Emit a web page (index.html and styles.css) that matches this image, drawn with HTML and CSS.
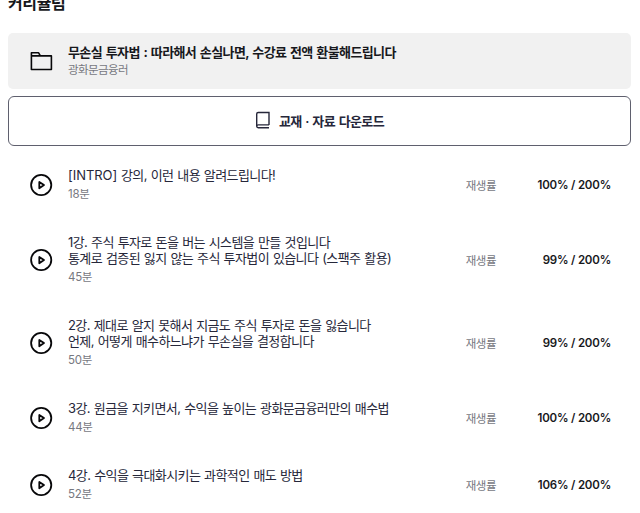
FILE: index.html
```html
<!DOCTYPE html>
<html lang="ko">
<head>
<meta charset="utf-8">
<title>커리큘럼</title>
<link rel="stylesheet" href="styles.css">
</head>
<body>
<svg class="defs" aria-hidden="true"><symbol id="play" viewBox="0 0 24 24"><circle cx="12.2" cy="12" r="10.1"/><path d="M10.3 8.9v6.4l4.7-3.2z"/></symbol></svg>
<main class="page">
<h2 class="title">커리큘럼</h2>
<header class="course">
<svg class="icon folder" viewBox="0 0 24 24"><path d="M2.4 20.5V3.8h7.2l1.8 3.1h11v13.6zM2.4 6.9h9"/></svg>
<div class="body"><h3 class="name">무손실 투자법 : 따라해서 손실나면, 수강료 전액 환불해드립니다</h3><p class="sub">광화문금융러</p></div>
</header>
<button class="download"><svg class="book" viewBox="0 0 16 20"><path d="M14 13.9V1.5H3.2Q1.7 1.5 1.7 3v12.4M14 13.9H3.2a1.45 1.45 0 0 0 0 2.9H14"/></svg><span>교재 · 자료 다운로드</span></button>
<ul class="list">
<li class="row"><svg class="icon"><use href="#play"/></svg><div class="body"><p class="name"><span class="latin">[INTRO]</span> 강의, 이런 내용 알려드립니다!</p><p class="sub">18분</p></div><span class="label">재생률</span><span class="rate">100% / 200%</span></li>
<li class="row tall"><svg class="icon"><use href="#play"/></svg><div class="body"><p class="name">1강. 주식 투자로 돈을 버는 시스템을 만들 것입니다<br>통계로 검증된 잃지 않는 주식 투자법이 있습니다 (스팩주 활용)</p><p class="sub">45분</p></div><span class="label">재생률</span><span class="rate">99% / 200%</span></li>
<li class="row tall"><svg class="icon"><use href="#play"/></svg><div class="body"><p class="name">2강. 제대로 알지 못해서 지금도 주식 투자로 돈을 잃습니다<br>언제, 어떻게 매수하느냐가 무손실을 결정합니다</p><p class="sub">50분</p></div><span class="label">재생률</span><span class="rate">99% / 200%</span></li>
<li class="row"><svg class="icon"><use href="#play"/></svg><div class="body"><p class="name">3강. 원금을 지키면서, 수익을 높이는 광화문금융러만의 매수법</p><p class="sub">44분</p></div><span class="label">재생률</span><span class="rate">100% / 200%</span></li>
<li class="row"><svg class="icon"><use href="#play"/></svg><div class="body"><p class="name">4강. 수익을 극대화시키는 과학적인 매도 방법</p><p class="sub">52분</p></div><span class="label">재생률</span><span class="rate">106% / 200%</span></li>
</ul>
</main>
</body>
</html>
```
FILE: styles.css
```css
* { box-sizing: border-box; margin: 0; padding: 0; }
body { font-family: Inter, "Noto Sans CJK KR", sans-serif; color: #17181c; background: #fff; overflow: hidden; }
.defs { position: absolute; width: 0; height: 0; }
.page { padding: 0 9px 0 8px; }
.title { height: 33px; font-size: 16px; line-height: 22px; font-weight: 700; letter-spacing: -.4px; margin-top: -8px; padding-bottom: 11px; margin-bottom: 8px; }
.course { display: flex; align-items: center; height: 56px; background: #f1f1f1; border-radius: 5px; padding-left: 21px; }
.icon { width: 24px; height: 24px; flex: none; fill: none; stroke: #08080a; stroke-width: 1.8; stroke-linejoin: round; }
.folder { stroke-width: 1.6; }
.body { flex: 1; margin-left: 15px; }
.name { font-size: 13px; line-height: 16px; letter-spacing: -.6px; word-spacing: .8px; font-weight: 400; white-space: nowrap; color: #26273a; }
h3.name { font-weight: 700; word-spacing: 1.15px; color: #17181c; }
.latin { letter-spacing: -.05px; }
.sub { font-size: 11.5px; line-height: 15px; letter-spacing: -.6px; color: #77787f; margin-top: 3px; }
.download { display: flex; width: 100%; height: 50px; align-items: center; justify-content: center; margin-top: 7px; border: 1px solid #5f606e; border-radius: 6px; background: #fff; font: 600 13px/18px Inter, "Noto Sans CJK KR", sans-serif; letter-spacing: -.6px; word-spacing: .9px; color: #26273a; }
.book { width: 16px; height: 20px; margin: 0 8px 1px 0; fill: none; stroke: #26273a; stroke-width: 1.4; }
.list { list-style: none; margin-top: 5px; }
.row { display: flex; align-items: center; height: 67.2px; padding: 0 20px 0 21px; }
.row .body { margin-top: -1px; }
.row .sub { margin-top: 4px; letter-spacing: -.3px; }
.tall { height: 83px; }
.label { font-size: 11.5px; letter-spacing: -.5px; color: #77787f; }
.rate { width: 115px; text-align: right; font-size: 11.5px; font-weight: 600; letter-spacing: -.2px; }
```
